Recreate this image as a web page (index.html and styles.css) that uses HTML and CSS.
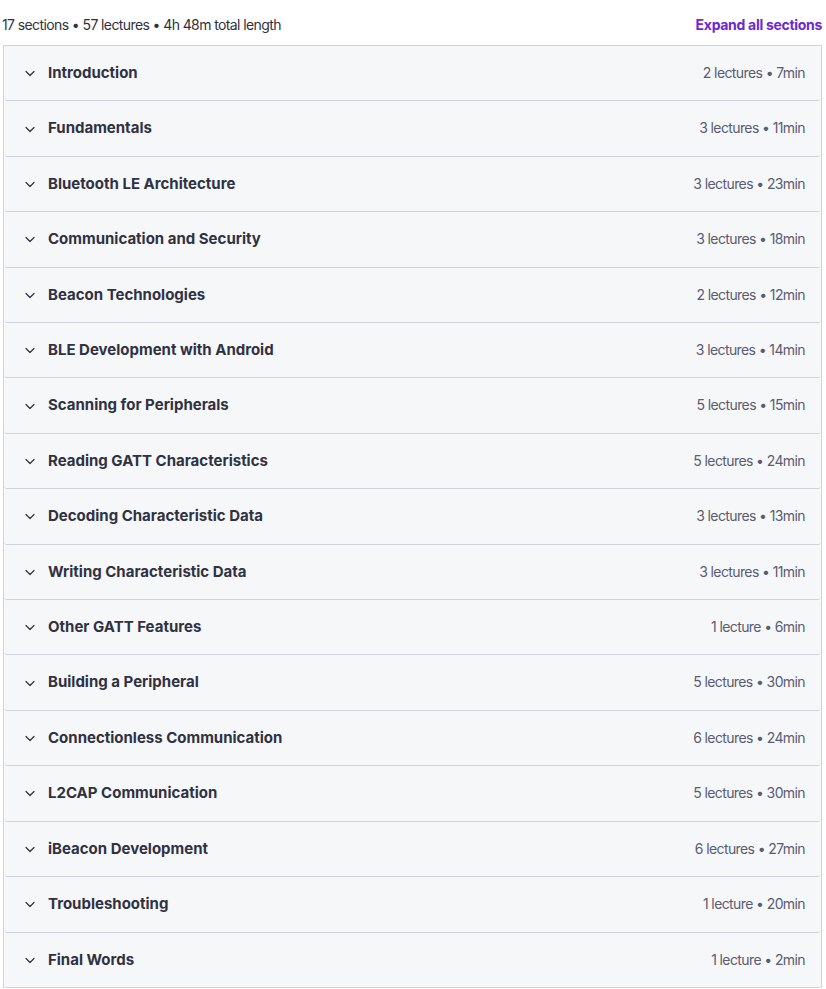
FILE: index.html
```html
<!DOCTYPE html>
<html lang="en">
<head>
    <meta charset="UTF-8">
    <meta name="viewport" content="width=device-width, initial-scale=1.0">
    <title>Course content</title>
    <link rel="stylesheet" href="styles.css">
</head>
<body>
    <div class="curriculum">
        <div class="curriculum-header">
            <span class="summary">17 sections • 57 lectures • 4h 48m total length</span>
            <button class="expand-btn">Expand all sections</button>
        </div>
        <div class="section-list"></div>
    </div>

    <script>
        const sections = [
            { title: "Introduction", lectures: 2, length: "7min" },
            { title: "Fundamentals", lectures: 3, length: "11min" },
            { title: "Bluetooth LE Architecture", lectures: 3, length: "23min" },
            { title: "Communication and Security", lectures: 3, length: "18min" },
            { title: "Beacon Technologies", lectures: 2, length: "12min" },
            { title: "BLE Development with Android", lectures: 3, length: "14min" },
            { title: "Scanning for Peripherals", lectures: 5, length: "15min" },
            { title: "Reading GATT Characteristics", lectures: 5, length: "24min" },
            { title: "Decoding Characteristic Data", lectures: 3, length: "13min" },
            { title: "Writing Characteristic Data", lectures: 3, length: "11min" },
            { title: "Other GATT Features", lectures: 1, length: "6min" },
            { title: "Building a Peripheral", lectures: 5, length: "30min" },
            { title: "Connectionless Communication", lectures: 6, length: "24min" },
            { title: "L2CAP Communication", lectures: 5, length: "30min" },
            { title: "iBeacon Development", lectures: 6, length: "27min" },
            { title: "Troubleshooting", lectures: 1, length: "20min" },
            { title: "Final Words", lectures: 1, length: "2min" }
        ];

        const list = document.querySelector('.section-list');

        sections.forEach(section => {
            const row = document.createElement('div');
            row.className = 'section';
            const count = section.lectures === 1 ? '1 lecture' : `${section.lectures} lectures`;
            row.innerHTML = `
                <svg class="chevron" viewBox="0 0 16 16" width="16" height="16">
                    <path d="M4 6.5l4 4 4-4" fill="none" stroke="currentColor" stroke-width="1.2" stroke-linecap="round" stroke-linejoin="round"/>
                </svg>
                <span class="section-title">${section.title}</span>
                <span class="section-meta">${count} • ${section.length}</span>
            `;
            list.appendChild(row);
        });
    </script>
</body>
</html>
```

FILE: styles.css
```css
body {
    margin: 0;
    font-family: Inter, "Noto Sans", sans-serif;
    color: #303141;
    background-color: #fff;
}
.curriculum {
    padding: 0 4px 0 3px;
}
.curriculum-header {
    display: flex;
    justify-content: space-between;
    align-items: center;
    height: 45px;
    padding-top: 3px;
    box-sizing: border-box;
    margin-left: -1px;
}
.summary {
    font-size: 14px;
    letter-spacing: -0.6px;
    color: #303141;
}
.expand-btn {
    border: none;
    background: none;
    padding: 0;
    font-family: inherit;
    font-size: 14px;
    font-weight: 700;
    letter-spacing: -0.3px;
    color: #6d28d2;
    cursor: pointer;
}
.section-list {
    border: 1px solid #d1d2e0;
    border-bottom: none;
}
.section {
    display: flex;
    align-items: center;
    padding: 16px 16px 16px 18px;
    line-height: 22.4px;
    background-color: #f6f7f9;
    border-bottom: 1px solid #d1d2e0;
    border-radius: 3px;
    cursor: pointer;
}
.chevron {
    flex-shrink: 0;
    color: #303141;
    margin-right: 10px;
}
.section-title {
    flex: 1;
    font-size: 15px;
    font-weight: 700;
}
.section-meta {
    font-size: 14px;
    letter-spacing: -0.6px;
    color: #595c73;
}
```
